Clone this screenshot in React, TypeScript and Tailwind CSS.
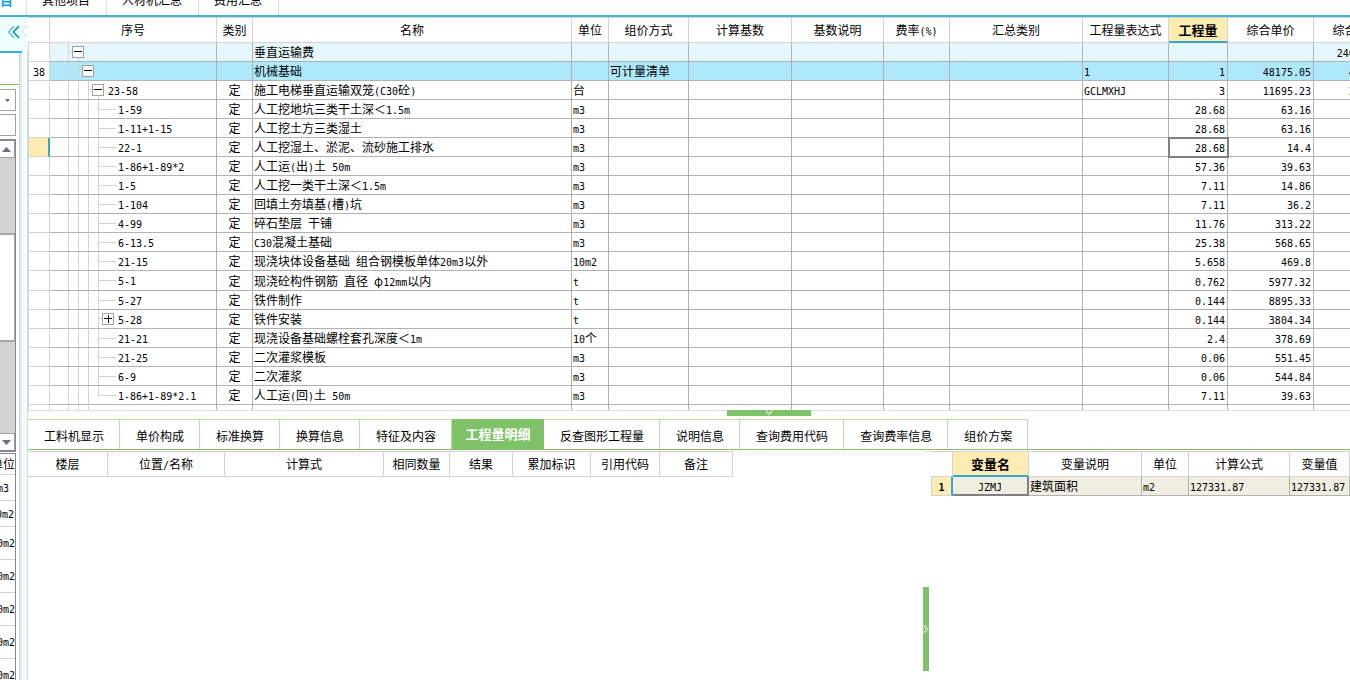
import { clsx } from "clsx";

type Row = {
  no?: string;
  code?: string;
  depth: number;
  node?: "open" | "closed";
  last?: boolean;
  tall?: boolean;
  kind?: string;
  name: string;
  unit?: string;
  pricing?: string;
  expr?: string;
  qty?: string;
  price?: string;
  total?: string;
  tone?: string;
  current?: boolean;
};

const rows: Row[] = [
  { depth: 0, node: "open", name: "垂直运输费", total: "2408752.50", tone: "bg-[#e5f7fc]" },
  { no: "38", depth: 1, node: "open", name: "机械基础", pricing: "可计量清单", expr: "1", qty: "1", price: "48175.05", total: "48175.05", tone: "bg-[#aee9fb]" },
  { code: "23-58", depth: 2, node: "open", kind: "定", name: "施工电梯垂直运输双笼(C30砼)", unit: "台", expr: "GCLMXHJ", qty: "3", price: "11695.23", total: "35085.69" },
  { code: "1-59", depth: 3, kind: "定", name: "人工挖地坑三类干土深＜1.5m", unit: "m3", qty: "28.68", price: "63.16" },
  { code: "1-11+1-15", depth: 3, kind: "定", name: "人工挖土方三类湿土", unit: "m3", qty: "28.68", price: "63.16" },
  { code: "22-1", depth: 3, kind: "定", name: "人工挖湿土、淤泥、流砂施工排水", unit: "m3", qty: "28.68", price: "14.4", current: true },
  { code: "1-86+1-89*2", depth: 3, kind: "定", name: "人工运(出)土 50m", unit: "m3", qty: "57.36", price: "39.63" },
  { code: "1-5", depth: 3, kind: "定", name: "人工挖一类干土深＜1.5m", unit: "m3", qty: "7.11", price: "14.86" },
  { code: "1-104", depth: 3, kind: "定", name: "回填土夯填基(槽)坑", unit: "m3", qty: "7.11", price: "36.2" },
  { code: "4-99", depth: 3, kind: "定", name: "碎石垫层 干铺", unit: "m3", qty: "11.76", price: "313.22" },
  { code: "6-13.5", depth: 3, kind: "定", name: "C30混凝土基础", unit: "m3", qty: "25.38", price: "568.65" },
  { code: "21-15", depth: 3, kind: "定", name: "现浇块体设备基础 组合钢模板单体20m3以外", unit: "10m2", qty: "5.658", price: "469.8" },
  { code: "5-1", depth: 3, kind: "定", name: "现浇砼构件钢筋 直径 φ12mm以内", unit: "t", qty: "0.762", price: "5977.32", tall: true },
  { code: "5-27", depth: 3, kind: "定", name: "铁件制作", unit: "t", qty: "0.144", price: "8895.33" },
  { code: "5-28", depth: 3, node: "closed", kind: "定", name: "铁件安装", unit: "t", qty: "0.144", price: "3804.34" },
  { code: "21-21", depth: 3, kind: "定", name: "现浇设备基础螺栓套孔深度＜1m", unit: "10个", qty: "2.4", price: "378.69" },
  { code: "21-25", depth: 3, kind: "定", name: "二次灌浆模板", unit: "m3", qty: "0.06", price: "551.45" },
  { code: "6-9", depth: 3, kind: "定", name: "二次灌浆", unit: "m3", qty: "0.06", price: "544.84" },
  { code: "1-86+1-89*2.1", depth: 3, last: true, kind: "定", name: "人工运(回)土 50m", unit: "m3", qty: "7.11", price: "39.63" },
];

const columns = [
  { title: "", width: "w-[22px]" },
  { title: "序号", width: "w-[167px]" },
  { title: "类别", width: "w-[36px]" },
  { title: "名称", width: "w-[319px]" },
  { title: "单位", width: "w-[37px]" },
  { title: "组价方式", width: "w-[80px]" },
  { title: "计算基数", width: "w-[103px]" },
  { title: "基数说明", width: "w-[92px]" },
  { title: "费率(%)", width: "w-[66px]" },
  { title: "汇总类别", width: "w-[133px]" },
  { title: "工程量表达式", width: "w-[86px]" },
  { title: "工程量", width: "w-[59px]", active: true },
  { title: "综合单价", width: "w-[86px]" },
  { title: "综合合价", width: "w-[86px]" },
];

const topTabs = ["其他项目", "人材机汇总", "费用汇总"];

const detailTabs = [
  "工料机显示", "单价构成", "标准换算", "换算信息", "特征及内容", "工程量明细",
  "反查图形工程量", "说明信息", "查询费用代码", "查询费率信息", "组价方案",
];

const detailColumns = [
  { title: "楼层", width: "w-[80px]" },
  { title: "位置/名称", width: "w-[117px]" },
  { title: "计算式", width: "w-[159px]" },
  { title: "相同数量", width: "w-[66px]" },
  { title: "结果", width: "w-[63px]" },
  { title: "累加标识", width: "w-[78px]" },
  { title: "引用代码", width: "w-[69px]" },
  { title: "备注", width: "w-[73px]" },
];

const sideRows = [
  { text: "m3", height: "h-[26px]", pad: "pr-[6px]" },
  { text: "10m2", height: "h-[26px]", pad: "pr-px" },
  { text: "10m2", height: "h-[33px]", pad: "" },
  { text: "10m2", height: "h-[33px]", pad: "" },
  { text: "10m2", height: "h-[33px]", pad: "" },
  { text: "10m2", height: "h-[33px]", pad: "" },
  { text: "10m2", height: "h-[33px]", pad: "" },
];

// Half-width runs use a 6px monospace so that two of them equal one hanzi
const Txt = ({ children }: { children?: string }) => (
  <>
    {(children ?? "").split(/([\x20-\x7e]+)/).map((part, i) =>
      i % 2 ? (
        <span key={i} className="font-['DejaVu_Sans_Mono',monospace] text-[10px] leading-none whitespace-pre">{part}</span>
      ) : (
        part
      )
    )}
  </>
);

const TreeCell = ({ row }: { row: Row }) => (
  <div className={clsx("flex", row.tall ? "h-[19px]" : "h-[18px]")}>
    <span className="w-[18px]" />
    {Array.from({ length: row.depth }, (_, i) => (
      <span key={i} className="w-[10px] border-l border-[#d3d3d3]" />
    ))}
    {row.node ? (
      <>
        <span className="w-1 border-l border-[#d3d3d3] pt-2">
          <span className="block h-px bg-[#d3d3d3]" />
        </span>
        <span className="flex w-3 flex-col pt-[3px]">
          <button
            aria-label={row.node === "open" ? "折叠" : "展开"}
            className="size-3 shrink-0 border border-[#a0a0a0] bg-white text-black"
          >
            <svg viewBox="0 0 10 10" className="block size-[10px]" shapeRendering="crispEdges">
              <path d={row.node === "open" ? "M1 4h8v1h-8z" : "M1 4h8v1h-8z M5 1h1v8h-1z"} fill="currentColor" />
            </svg>
          </button>
          {row.node === "open" && <span className="ml-[6px] w-px flex-1 bg-[#d3d3d3]" />}
        </span>
        <span className="pl-1"><Txt>{row.code}</Txt></span>
      </>
    ) : (
      <>
        <span className={clsx("w-px bg-[#d3d3d3]", row.last && "h-[10px]")} />
        <span className="mt-[9px] h-px w-[17px] bg-[#d3d3d3]" />
        <span className="pl-[2px]"><Txt>{row.code}</Txt></span>
      </>
    )}
  </div>
);

const cell = "border-r border-b border-[#b2b2b2] p-0 whitespace-nowrap";

const MainTable = () => (
  <table className="w-[1372px] table-fixed border-separate border-spacing-0 leading-[18px]">
    <thead>
      <tr className="h-[26px]">
        {columns.map((c, i) => (
          <th
            key={i}
            className={clsx(
              "border-t border-r border-[#d3d3d3] p-0 whitespace-nowrap",
              c.width,
              c.active ? "border-b-2 border-b-[#36a5d1] bg-[#ffecb3] text-[13px] font-bold" : "border-b font-normal"
            )}
          >
            <Txt>{c.title}</Txt>
          </th>
        ))}
      </tr>
    </thead>
    <tbody>
      {rows.map((r, i) => (
        <tr key={i} className={r.tone}>
          <td
            className={clsx(
              "border-b border-l border-[#d3d3d3] p-0 text-center",
              r.current ? "border-r-2 border-r-[#36a5d1] bg-[#ffecb3]" : "border-r bg-white"
            )}
          >
            <Txt>{r.no}</Txt>
          </td>
          <td className={cell}><TreeCell row={r} /></td>
          <td className={clsx(cell, "text-center")}>{r.kind}</td>
          <td className={clsx(cell, "pl-px")}><Txt>{r.name}</Txt></td>
          <td className={clsx(cell, "pl-px")}><Txt>{r.unit}</Txt></td>
          <td className={clsx(cell, "pl-px")}>{r.pricing}</td>
          <td className={cell} />
          <td className={cell} />
          <td className={cell} />
          <td className={cell} />
          <td className={clsx(cell, "pl-px")}><Txt>{r.expr}</Txt></td>
          <td className={clsx(cell, "pr-[2px] text-right", r.current && "outline-2 -outline-offset-1 outline-[#808080]")}>
            <Txt>{r.qty}</Txt>
          </td>
          <td className={clsx(cell, "pr-[2px] text-right")}><Txt>{r.price}</Txt></td>
          <td className={clsx(cell, "pr-[2px] text-right")}><Txt>{r.total}</Txt></td>
        </tr>
      ))}
      {/* next row, cut by the splitter */}
      <tr className="h-5">
        <td className="border-x border-[#d3d3d3] p-0" />
        <td className={cell}>
          <div className="flex h-[18px]">
            <span className="w-[18px]" />
            <span className="w-[10px] border-l border-[#d3d3d3]" />
            <span className="w-[10px] border-l border-[#d3d3d3]" />
            <span className="w-[10px] border-l border-[#d3d3d3]" />
          </div>
        </td>
        {columns.slice(2).map((_, i) => <td key={i} className={cell} />)}
      </tr>
    </tbody>
  </table>
);

const SidePanel = () => (
  <aside className="flex w-7 shrink-0 flex-col overflow-hidden">
    <div className="relative h-[34px] shrink-0 bg-[#effefe] pt-2 pl-[7px]">
      <button aria-label="收起" className="block">
        <svg width="13" height="14" viewBox="0 0 13 14" fill="none">
          <path d="M7 1L1.5 7L7 13" stroke="#5cb9cf" strokeWidth="1.3" />
          <path d="M12 1L6.5 7L12 13" stroke="#0e93b8" strokeWidth="1.7" />
        </svg>
      </button>
      <svg className="absolute top-2 right-0" width="7" height="12" viewBox="0 0 7 12">
        <path d="M7 0L1 6L7 12" fill="#fff" stroke="#d9d9d9" />
      </svg>
    </div>
    <div className="flex min-h-0 flex-1">
      <div className="flex w-[22px] border-t-2 border-[#35b0e2]">
        <div className="flex w-[19px] flex-col">
          <div className="h-8 shrink-0 border-b border-[#80c269]" />
          <div className="relative mt-1 h-[22px] w-4 shrink-0">
            <select aria-label="专业" className="block h-full w-full appearance-none border border-l-0 border-[#a0a0a0] bg-white" />
            <svg className="pointer-events-none absolute top-[10px] left-[5px]" width="5" height="3" viewBox="0 0 5 3">
              <path d="M0 0h5L2.5 3z" fill="#5f6375" />
            </svg>
          </div>
          <input aria-label="查询" className="mt-[3px] block h-[22px] w-4 shrink-0 border border-l-0 border-[#a0a0a0] bg-white" />
          <div className="mt-[3px] flex h-[313px] w-4 shrink-0 flex-col border-y-2 border-r border-[#85859a] bg-[#d3d3d3]">
            <button aria-label="向上滚动" className="flex h-[17px] items-center border-r border-b border-[#a0a0a0] bg-white pl-[2px]">
              <svg width="9" height="5" viewBox="0 0 9 5"><path d="M0 5L4.5 0L9 5z" fill="#6b6e85" /></svg>
            </button>
            <div className="mt-[75px] h-[109px] border-y-2 border-r border-[#a8a8a8] bg-white" />
            <button aria-label="向下滚动" className="mt-auto flex h-[17px] items-center border-t border-r border-[#a0a0a0] bg-white pl-[2px]">
              <svg width="9" height="5" viewBox="0 0 9 5"><path d="M0 0h9L4.5 5z" fill="#6b6e85" /></svg>
            </button>
          </div>
          <table className="mt-px block min-h-0 w-4 flex-1 overflow-hidden border-t border-r border-[#85859a] leading-[18px]">
            <tbody className="block">
              <tr className="block">
                <th className="flex h-[21px] w-[15px] items-center justify-end border-b border-[#d3d3d3] p-0 font-normal whitespace-nowrap">单位</th>
              </tr>
              {sideRows.map((r, i) => (
                <tr key={i} className="block">
                  <td className={clsx("flex w-[15px] items-center justify-end border-b border-[#d3d3d3] p-0 pt-[2px]", r.height, r.pad)}>
                    <Txt>{r.text}</Txt>
                  </td>
                </tr>
              ))}
            </tbody>
          </table>
        </div>
        <div className="flex-1 border-l border-[#cfcfcf] bg-[#ebebeb]" />
      </div>
      <div className="flex-1 border-r border-[#d9d9d9] bg-[#effefe]" />
    </div>
  </aside>
);

const DetailTabs = () => (
  <div role="tablist" className="flex h-[31px] shrink-0 border-b border-[#80c269] leading-[18px]">
    {detailTabs.map((tab) =>
      tab === "工程量明细" ? (
        <button key={tab} role="tab" aria-selected className="w-[92px] bg-[#80c269] text-[13px] font-bold whitespace-nowrap text-white">
          {tab}
        </button>
      ) : (
        <button key={tab} role="tab" aria-selected={false} className="border-t border-r border-[#b5e39b] pt-[2px] pr-[15px] pl-4 whitespace-nowrap">
          {tab}
        </button>
      )
    )}
  </div>
);

const headCell = "border-t border-r border-b border-[#d3d3d3] p-0 font-normal whitespace-nowrap";
const varCell = "border-r border-b border-[#b2b2b2] bg-[#f0eee0] p-0 pl-px";

const VariableTable = () => (
  <table className="w-full table-fixed border-separate border-spacing-0 leading-[18px]">
    <thead>
      <tr className="h-[26px]">
        <th className={clsx(headCell, "w-[22px]")} />
        <th className="w-[76px] border-t border-r border-b-2 border-[#d3d3d3] border-b-[#36a5d1] bg-[#ffecb3] p-0 text-[13px] font-bold">变量名</th>
        <th className={clsx(headCell, "w-[113px]")}>变量说明</th>
        <th className={clsx(headCell, "w-[47px]")}>单位</th>
        <th className={clsx(headCell, "w-[101px]")}>计算公式</th>
        <th className={headCell}>变量值</th>
      </tr>
    </thead>
    <tbody>
      <tr>
        <td className="border-r-2 border-b border-l border-[#d3d3d3] border-r-[#36a5d1] bg-[#ffecb3] p-0 text-center font-bold"><Txt>1</Txt></td>
        <td className="border-r-2 border-b-2 border-[#808080] bg-[#f0eee0] p-0 text-center leading-[17px]"><Txt>JZMJ</Txt></td>
        <td className={varCell}>建筑面积</td>
        <td className={varCell}><Txt>m2</Txt></td>
        <td className={varCell}><Txt>127331.87</Txt></td>
        <td className={varCell}><Txt>127331.87</Txt></td>
      </tr>
    </tbody>
  </table>
);

export default function App() {
  return (
    <div className="flex h-screen flex-col overflow-hidden bg-white font-['Noto_Sans_CJK_SC',sans-serif] text-xs text-black">
      <nav className="flex h-[17px] shrink-0 items-end overflow-hidden border-b-2 border-[#43b5e0]">
        <a href="#" className="flex h-[30px] w-[27px] items-center overflow-hidden border-r border-[#dcdcdc] text-[13px] font-bold text-[#0aa0f0]">目</a>
        {topTabs.map((t) => (
          <a key={t} href="#" className="flex h-[30px] items-center border-r border-[#dcdcdc] pr-4 pl-[15px] whitespace-nowrap">{t}</a>
        ))}
      </nav>

      <div className="flex min-h-0 flex-1">
        <SidePanel />
        <main className="flex min-w-0 flex-1 flex-col">
          <div className="h-[394px] shrink-0 overflow-hidden border-b border-[#e0e0e0]">
            <MainTable />
          </div>
          <div className="-mt-px flex h-[9px] shrink-0">
            <button aria-label="收起下方面板" className="ml-[699px] flex h-[6px] w-[84px] justify-center bg-[#80c269]">
              <svg width="10" height="6" viewBox="0 0 10 6" fill="none" stroke="#d9efd0">
                <path d="M1 0L5 3L9 0M2 2L5 5L8 2" />
              </svg>
            </button>
          </div>

          <DetailTabs />

          <div className="mt-px flex min-h-0 flex-1">
            <section className="min-w-0 flex-1 overflow-hidden">
              <table className="w-[705px] table-fixed border-separate border-spacing-0 leading-[18px]">
                <thead>
                  <tr className="h-[26px]">
                    {detailColumns.map((c) => (
                      <th key={c.title} className={clsx(headCell, c.width)}><Txt>{c.title}</Txt></th>
                    ))}
                  </tr>
                </thead>
              </table>
            </section>
            <div className="w-2 shrink-0 border-t border-[#e6e6e6] pt-[135px]">
              <button aria-label="收起右侧面板" className="flex h-[84px] w-[6px] items-center bg-[#80c269]">
                <svg width="6" height="10" viewBox="0 0 6 10" fill="none" stroke="#d9efd0">
                  <path d="M0 1L3 5L0 9M2 1L5 5L2 9" />
                </svg>
              </button>
            </div>
            <section className="w-[419px] shrink-0">
              <VariableTable />
            </section>
          </div>
        </main>
      </div>
    </div>
  );
}
